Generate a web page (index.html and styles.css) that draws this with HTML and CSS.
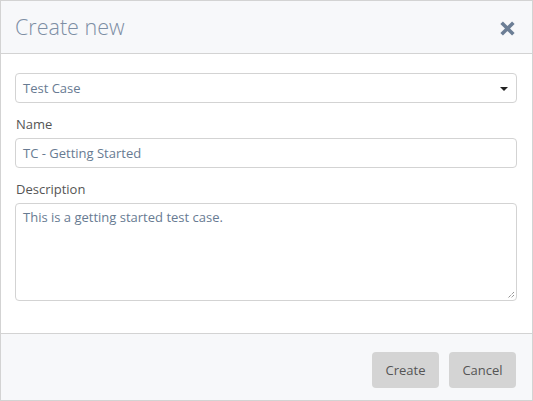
FILE: index.html
```html
<!DOCTYPE html>
<html>
<head>
<meta charset="utf-8">
<link rel="stylesheet" href="styles.css">
</head>
<body>
<div class="dialog">
  <div class="header">
    <h1 class="title">Create new</h1>
    <span class="close" aria-label="Close">
      <svg width="17" height="17" viewBox="0 0 16 16"><path d="M2.5 2.5 L13.5 13.5 M13.5 2.5 L2.5 13.5" stroke="#6c7e95" stroke-width="3.4" stroke-linecap="butt"/></svg>
    </span>
  </div>
  <div class="body">
    <div class="select">
      <span>Test Case</span>
      <svg class="caret" width="8" height="4" viewBox="0 0 8 4"><path d="M0 0 H8 L4 4 Z" fill="#222"/></svg>
    </div>
    <label class="label">Name</label>
    <div class="input">TC - Getting Started</div>
    <label class="label">Description</label>
    <div class="textarea">This is a getting started test case.
      <svg class="grip" width="8" height="8" viewBox="0 0 8 8"><path d="M7 1 L1 7 M7 4 L4 7" stroke="#666" stroke-width="1" stroke-dasharray="1 1"/></svg>
    </div>
  </div>
  <div class="footer">
    <button class="btn">Create</button>
    <button class="btn">Cancel</button>
  </div>
</div>
</body>
</html>
```
FILE: styles.css
```css
html, body { margin: 0; padding: 0; background: #fff; }
body { font-family: "Open Sans", "Noto Sans", sans-serif; }
.dialog {
  width: 533px; height: 401px; box-sizing: border-box;
  border: 1px solid #d3d3d3; display: flex; flex-direction: column;
  background: #fff;
}
.header {
  height: 52px; background: #f7f8fa; border-bottom: 1px solid #d3d3d3;
  display: flex; align-items: center; justify-content: space-between;
  padding: 0 16px 0 14px;
}
.title { margin: 0; font-weight: 300; font-size: 21.5px; color: #7d8ea4; position: relative; top: -1px; }
.close { display: flex; width: 17px; height: 17px; position: relative; top: 1px; }
.body { flex: 1; padding: 19px 15px 0 14px; display: flex; flex-direction: column; }
.select, .input, .textarea {
  box-sizing: border-box; border: 1px solid #d3d3d3; border-radius: 4px;
  font-size: 13px; color: #687b92; padding: 0 8px 0 7px;
}
.select { height: 30px; display: flex; align-items: center; justify-content: space-between; padding-right: 8px; }
.caret { margin-top: 1px; }
.label { font-size: 13px; color: #555; margin: 12px 0 5px 1px; line-height: 18px; }
.input { height: 30px; display: flex; align-items: center; }
.textarea { height: 98px; padding-top: 5px; position: relative; line-height: 17px; }
.grip { position: absolute; right: 1px; bottom: 1px; }
.footer {
  height: 67px; flex: none; box-sizing: border-box; border-top: 1px solid #d3d3d3; background: #f7f8fa;
  display: flex; justify-content: flex-end; align-items: flex-start; gap: 10px;
  padding: 18px 16px 0 0;
}
.btn {
  width: 67px; height: 36px; border: 0; border-radius: 4px; background: #d4d4d4;
  font-family: "Open Sans", "Noto Sans", sans-serif; font-size: 13px; color: #555; padding: 0;
}
```
